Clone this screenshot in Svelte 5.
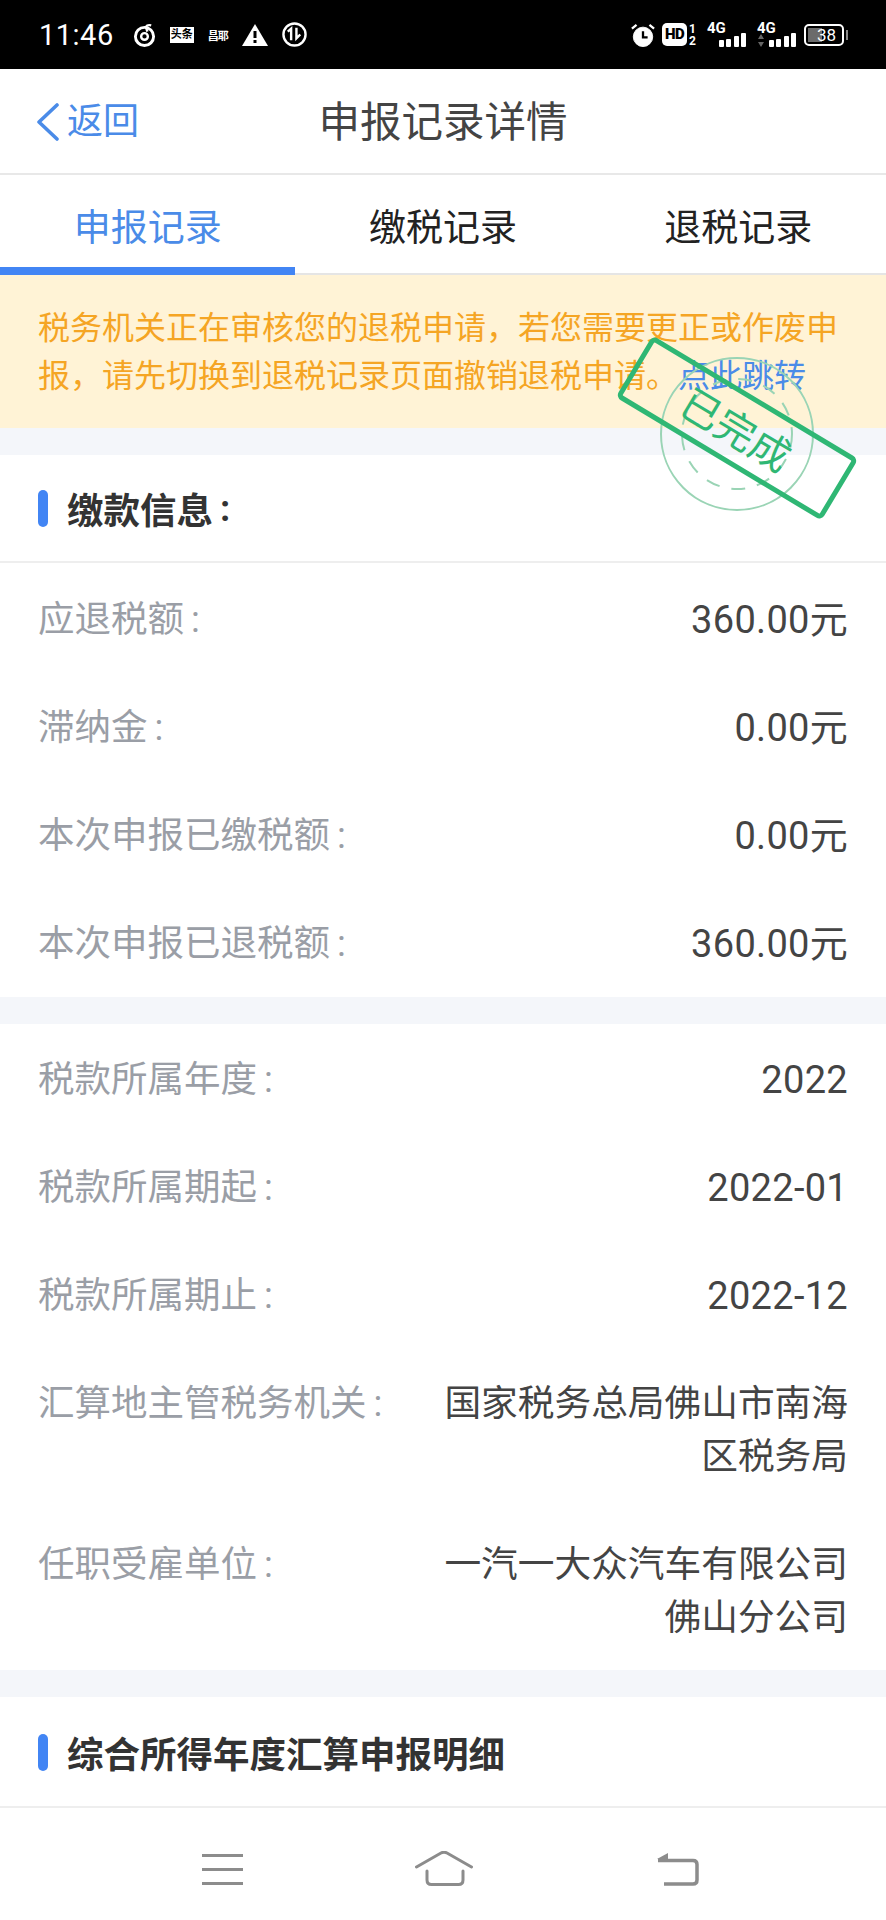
<script lang="ts">
  // 申报记录详情 page: status bar, header, tabs, notice, info cards, nav bar.
  const payRows = [
    { label: '应退税额', value: '360.00元' },
    { label: '滞纳金', value: '0.00元' },
    { label: '本次申报已缴税额', value: '0.00元' },
    { label: '本次申报已退税额', value: '360.00元' }
  ];
  const taxRows = [
    { label: '税款所属年度', value: '2022' },
    { label: '税款所属期起', value: '2022-01' },
    { label: '税款所属期止', value: '2022-12' },
    { label: '汇算地主管税务机关', value: '国家税务总局佛山市南海区税务局', long: true },
    { label: '任职受雇单位', value: '一汽一大众汽车有限公司佛山分公司', long: true }
  ];
  const tabs = ['申报记录', '缴税记录', '退税记录'];
</script>

<div class="page">
  <div class="status">
    <div class="status__left">
      <span class="status__time">11:46</span>
      <svg width="23" height="24" viewBox="0 0 24 25" fill="none" stroke="#fff" stroke-width="3">
        <circle cx="12" cy="14" r="9.5" />
        <circle cx="12" cy="14" r="3.5" stroke-width="2.5" />
        <path d="M15 9 L13.5 4 Q15 1.500 19 2.500" stroke-width="2.500" />
      </svg>
      <span class="status__chip">头条</span>
      <span class="status__tiny">昌耶</span>
      <svg width="26" height="22" viewBox="0 0 26 22">
        <path d="M13 0 L26 22 H0 Z" fill="#fff" />
        <rect x="11.500" y="7" width="3" height="7" fill="#000" />
        <rect x="11.500" y="16" width="3" height="3" fill="#000" />
      </svg>
      <svg width="25" height="25" viewBox="0 0 26 26" fill="none" stroke="#fff">
        <circle cx="13" cy="13" r="11.500" stroke-width="2.500" />
        <path d="M6 10 L9.500 7 V19 M15 6 V17 L19 13" stroke-width="2.500" />
      </svg>
    </div>
    <div class="status__right">
      <svg width="24" height="24" viewBox="0 0 26 26" fill="none" stroke="#fff">
        <circle cx="13" cy="15" r="10.500" fill="#fff" />
        <path d="M13 9 V15.500 H18" stroke="#000" stroke-width="2.500" />
        <path d="M1 6 L6 2 M25 6 L20 2" stroke-width="2.500" />
      </svg>
      <span class="status__hd">HD</span>
      <span class="status__sim"><i>1</i><i>2</i></span>
      <span class="status__net">
        <b>4G</b>
        <span class="bars"><i class="b1"></i><i class="b2"></i><i class="b3"></i><i class="b4"></i></span>
      </span>
      <span class="status__net status__net--second">
        <b>4G</b>
        <span class="bars"><i class="b1"></i><i class="b2"></i><i class="b3"></i><i class="b4"></i></span>
        <svg class="status__arrows" width="6" height="13" viewBox="0 0 6 13" fill="#666">
          <path d="M3 0 L6 5 H0 Z M0 8 H6 L3 13 Z" />
        </svg>
      </span>
      <span class="battery"><span class="battery__fill"></span><span class="battery__num">38</span></span>
    </div>
  </div>

  <header class="head">
    <div class="head__back">
      <svg width="24" height="38" viewBox="0 0 24 38" fill="none" stroke="#4a8be8" stroke-width="3.600" stroke-linecap="round" stroke-linejoin="round">
        <path d="M21 2 L3 19 L21 36" />
      </svg>
      <span>返回</span>
    </div>
    <h1 class="head__title">申报记录详情</h1>
  </header>

  <nav class="tabs">
    {#each tabs as tab, i}
      <div class="tabs__item" class:tabs__item--on={i === 0}>{tab}</div>
    {/each}
  </nav>

  <div class="notice">
    税务机关正在审核您的退税申请，若您需要更正或作废申报，请先切换到退税记录页面撤销退税申请。<span class="notice__link">点此跳转</span>
  </div>

  <section class="card">
    <div class="card__head"><i class="card__mark"></i>缴款信息<span class="card__colon">:</span></div>
    <div class="card__rows card__rows--pay">
      {#each payRows as row}
        <div class="row">
          <span class="row__label">{row.label}<span class="row__colon">:</span></span>
          <span class="row__value">{row.value}</span>
        </div>
      {/each}
    </div>
  </section>

  <section class="card">
    <div class="card__rows">
      {#each taxRows as row}
        <div class="row">
          <span class="row__label">{row.label}<span class="row__colon">:</span></span>
          <span class="row__value" class:row__value--long={row.long}>{row.value}</span>
        </div>
      {/each}
    </div>
  </section>

  <section class="card">
    <div class="card__head card__head--flat"><i class="card__mark"></i>综合所得年度汇算申报明细</div>
  </section>

  <div class="stamp" aria-hidden="true">
    <svg width="226" height="226" viewBox="0 0 226 226" fill="none">
      <circle cx="113" cy="113" r="76" stroke="#9ad4b5" stroke-width="2" />
      <circle cx="113" cy="113" r="55" stroke="#9ad4b5" stroke-width="2" stroke-dasharray="14 12" />
    </svg>
    <div class="stamp__box">已完成</div>
  </div>

  <footer class="navbar">
    <svg width="41" height="31" viewBox="0 0 41 31" fill="#8c8c8c">
      <rect x="0" y="0" width="41" height="3" />
      <rect x="0" y="14" width="41" height="3" />
      <rect x="0" y="28" width="41" height="3" />
    </svg>
    <svg width="58" height="36" viewBox="0 0 58 36" fill="none" stroke="#8c8c8c" stroke-width="3" stroke-linecap="round" stroke-linejoin="round">
      <path d="M1.500 16 L26 2 Q29 0.500 32 2 L56.500 16" />
      <path d="M12 20 V29 Q12 33.500 16.500 33.500 H43.500 Q48 33.500 48 29 V20" />
    </svg>
    <svg width="42" height="33" viewBox="0 0 42 33" fill="none" stroke="#8c8c8c" stroke-width="3.500">
      <path d="M1 7.500 H36 Q40 7.500 40 11.500 V27 Q40 31 36 31 H7" />
      <path d="M0 6 L11 0 V7 Z" fill="#8c8c8c" stroke="none" />
    </svg>
  </footer>
</div>

<style>
  :global(body) {
    margin: 0;
    background: #fff;
  }
  .page {
    position: relative;
    width: 886px;
    height: 1920px;
    overflow: hidden;
    background: #f4f6fa;
    font-family: 'Roboto', 'Noto Sans CJK SC', sans-serif;
  }

  .status {
    height: 69px;
    background: #000;
    color: #fff;
    display: flex;
    align-items: center;
    justify-content: space-between;
    padding: 0 37px 0 39px;
    box-sizing: border-box;
  }
  .status__left,
  .status__right {
    display: flex;
    align-items: center;
  }
  .status__left { gap: 14px; }
  .status__time {
    font-size: 29px;
    letter-spacing: 0.5px;
    margin-right: 5px;
  }
  .status__chip {
    background: #fff;
    color: #000;
    font-size: 11px;
    font-weight: 700;
    padding: 1px 1px;
    line-height: 14px;
  }
  .status__tiny {
    font-size: 11px;
    font-weight: 700;
    letter-spacing: -1px;
  }
  .status__hd {
    width: 25px;
    text-align: center;
    background: #fff;
    color: #000;
    font-size: 15px;
    font-weight: 900;
    line-height: 23px;
    border-radius: 5px;
    letter-spacing: -0.5px;
    margin-left: 7px;
  }
  .status__sim {
    width: 11px;
    display: flex;
    flex-direction: column;
    align-items: center;
    font-size: 12px;
    font-weight: 700;
    line-height: 12px;
  }
  .status__sim i { font-style: normal; }
  .status__net {
    position: relative;
    display: flex;
    flex-direction: column;
    width: 39px;
    margin-left: 9px;
  }
  .status__net--second { margin-left: 11px; }
  .status__net b {
    font-size: 15px;
    line-height: 11px;
  }
  .status__arrows {
    position: absolute;
    left: 1px;
    bottom: 0;
  }
  .bars {
    display: flex;
    align-items: flex-end;
    justify-content: flex-end;
    gap: 2.500px;
    height: 13px;
  }
  .bars i {
    width: 5px;
    background: #fff;
    border-radius: 1px;
  }
  .bars .b1 { height: 7px; }
  .bars .b2 { height: 8px; }
  .bars .b3 { height: 11px; }
  .bars .b4 { height: 14px; }
  .battery {
    position: relative;
    width: 40px;
    height: 22px;
    box-sizing: border-box;
    border: 2px solid #fff;
    border-radius: 5px;
    margin: 0 5px 0 8px;
  }
  .battery::after {
    content: '';
    position: absolute;
    right: -6px;
    top: 4px;
    width: 2px;
    height: 10px;
    background: #888;
  }
  .battery__fill {
    position: absolute;
    left: 2px;
    top: 2px;
    bottom: 2px;
    width: 14px;
    background: #6b6b6b;
  }
  .battery__num {
    position: absolute;
    left: 5px;
    right: 0;
    top: 0;
    text-align: center;
    font-size: 17px;
    line-height: 18px;
  }

  .head {
    position: relative;
    height: 106px;
    padding-top: 4px;
    background: #fff;
    border-bottom: 2px solid #e8e8e8;
    box-sizing: border-box;
    display: flex;
    align-items: center;
    justify-content: center;
  }
  .head__back {
    position: absolute;
    left: 36px;
    top: 31px;
    display: flex;
    align-items: center;
    gap: 7px;
    color: #4a8be8;
    font-size: 36px;
    line-height: 44px;
  }
  .head__title {
    margin: 0;
    font-size: 41.500px;
    font-weight: 400;
    color: #444;
    line-height: 60px;
  }

  .tabs {
    height: 100px;
    background: #fff;
    display: flex;
    border-bottom: 2px solid #e5e5e5;
    box-sizing: border-box;
  }
  .tabs__item {
    flex: 1;
    text-align: center;
    font-size: 37px;
    line-height: 50px;
    padding-top: 29px;
    color: #222;
    height: 100px;
    box-sizing: border-box;
  }
  .tabs__item--on {
    color: #4a8be8;
    border-bottom: 8px solid #4285f4;
  }

  .notice {
    height: 153px;
    background: #fff3d6;
    color: #f5a524;
    font-size: 32px;
    line-height: 47.500px;
    padding: 30px 30px 0 38px;
    box-sizing: border-box;
  }
  .notice__link { color: #4a8be8; }

  .card {
    background: #fff;
    margin-top: 27px;
  }
  .card__head {
    height: 108px;
    display: flex;
    align-items: center;
    font-size: 36.500px;
    font-weight: 700;
    color: #333;
    padding-left: 38px;
    border-bottom: 2px solid #eee;
    box-sizing: border-box;
  }
  .card__head--flat { height: 110px; border-bottom: 0; }
  .card__colon { margin-left: 7px; }
  .card__mark {
    width: 10px;
    height: 37px;
    border-radius: 5px;
    background: #4285f4;
    margin-right: 19px;
  }
  .card__rows { padding: 0 38px; }
  .card__rows--pay { padding: 1px 38px; }
  .row {
    display: flex;
    justify-content: space-between;
    gap: 30px;
    padding: 30px 0 26px;
    line-height: 52px;
  }
  .row__label {
    color: #9a9ea6;
    flex: none;
    font-size: 36.500px;
  }
  .row__colon { margin-left: 7px; }
  .row__value {
    color: #444;
    text-align: right;
    font-size: 38px;
    letter-spacing: 0.3px;
  }
  .row__value--long {
    font-size: 36.700px;
    line-height: 52.500px;
    letter-spacing: 0;
    width: 408px;
  }

  .stamp {
    position: absolute;
    left: 623.500px;
    top: 320.500px;
    width: 226px;
    height: 226px;
  }
  .stamp__box {
    position: absolute;
    left: -7px;
    top: 71.500px;
    width: 240px;
    height: 72px;
    box-sizing: border-box;
    border: 5px solid #2fb774;
    border-radius: 6px;
    transform: rotate(31deg);
    color: #2fb774;
    font-size: 40px;
    line-height: 70px;
    text-align: center;
  }

  .navbar {
    position: absolute;
    left: 0;
    right: 0;
    bottom: 0;
    height: 114px;
    background: #fff;
    border-top: 2px solid #eee;
    box-sizing: border-box;
    display: grid;
    grid-template-columns: 222px 222px 246px;
    justify-items: center;
    align-items: center;
    padding: 10px 0 0 111px;
  }
</style>
